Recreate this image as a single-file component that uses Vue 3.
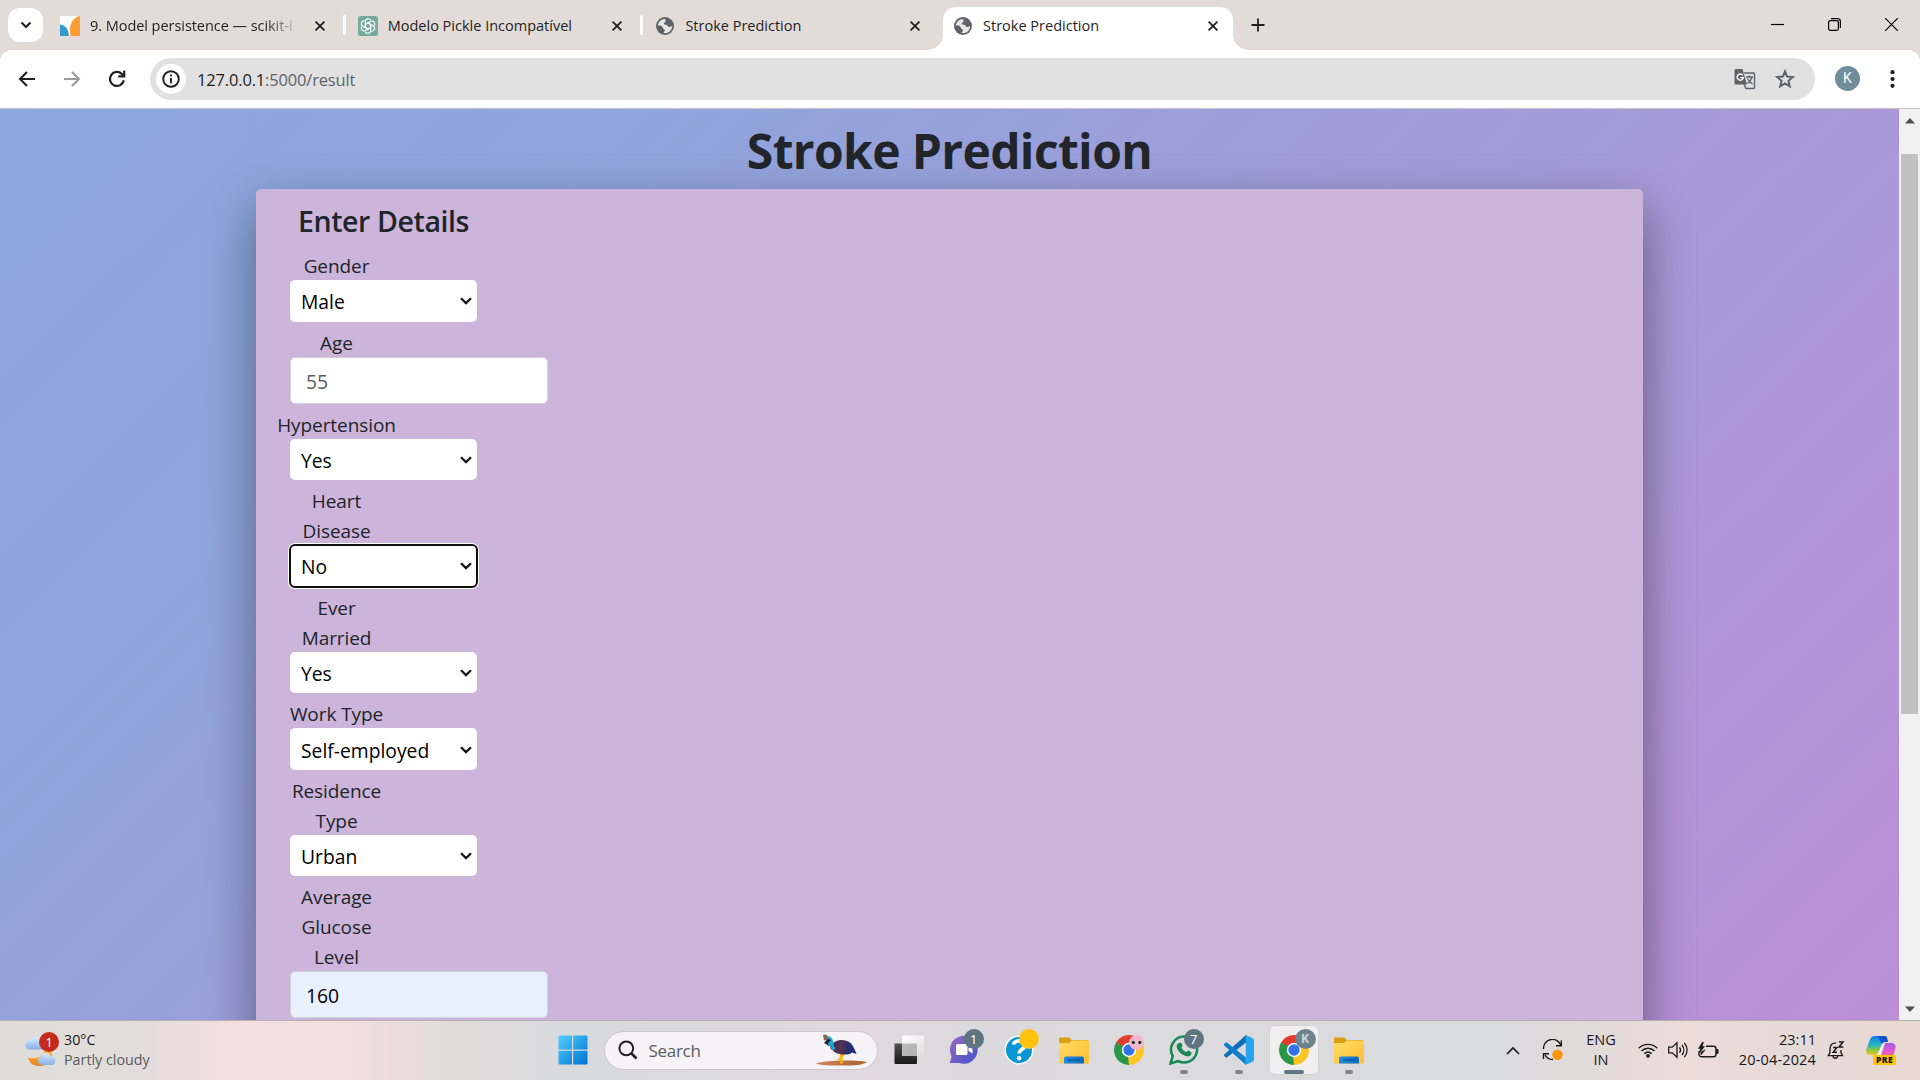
<script setup>
const tabs = [
  { title: '9. Model persistence — scikit-l', icon: 'sklearn', cut: true },
  { title: 'Modelo Pickle Incompatível', icon: 'gpt', line: true },
  { title: 'Stroke Prediction', icon: 'globe', line: true },
  { title: 'Stroke Prediction', icon: 'globe', active: true },
]

const fields = [
  { label: ['Gender'], value: 'Male', type: 'select' },
  { label: ['Age'], value: '55', type: 'placeholder' },
  { label: ['Hypertension'], value: 'Yes', type: 'select' },
  { label: ['Heart', 'Disease'], value: 'No', type: 'select', focus: true },
  { label: ['Ever', 'Married'], value: 'Yes', type: 'select' },
  { label: ['Work Type'], value: 'Self-employed', type: 'select' },
  { label: ['Residence', 'Type'], value: 'Urban', type: 'select' },
  { label: ['Average', 'Glucose', 'Level'], value: '160', type: 'filled' },
]

const apps = [
  { icon: 'taskview' },
  { icon: 'chat', badge: '1' },
  { icon: 'help', badge: ' ', tone: 'yellow' },
  { icon: 'folder' },
  { icon: 'chrome', face: true },
  { icon: 'whatsapp', badge: '7', open: true },
  { icon: 'vscode', open: true },
  { icon: 'chrome', badge: 'K', tone: 'profile', current: true },
  { icon: 'folder', open: true },
]
</script>

<template>
  <div class="screen">
    <header class="tabstrip">
      <button class="tab-search">
        <svg width="12" height="8" viewBox="0 0 12 8"><path d="M1.500 1.500 6 6l4.500-4.500" fill="none" stroke="#1f1f1f" stroke-width="2.200" /></svg>
      </button>
      <div class="tabs">
        <div v-for="(t, i) in tabs" :key="i" class="tab" :class="{ active: t.active, lined: t.line }">
          <svg v-if="t.icon === 'sklearn'" class="fav" viewBox="0 0 20 20">
            <path d="M0 0h20v20H0z" fill="#fff" />
            <path d="M0 8.500C5 9 8.800 13 8.800 20H0z" fill="#3499cd" />
            <path d="M20 0v20h-9.500C8.500 10 12 1 20 0z" fill="#ff9b33" />
          </svg>
          <svg v-else-if="t.icon === 'gpt'" class="fav" viewBox="0 0 20 20">
            <rect width="20" height="20" rx="3" fill="#74aa9c" />
            <g fill="none" stroke="#fff" stroke-width="1.150" stroke-linejoin="round">
              <path v-for="a in 6" :key="a" :transform="`rotate(${a * 60} 10 10)`" d="M7.300 8.400V5.600C7.300 2.300 11.600 1.900 12.700 4.300M10 7 12.700 8.500v3.300" />
            </g>
          </svg>
          <svg v-else class="fav" viewBox="0 0 20 20">
            <circle cx="10" cy="10" r="9" fill="#5f6368" />
            <path d="M10.500 2.900c-4.200-.2-7.500 3-7.600 6.700 1.500-.2 3.400-.1 4.300.9 1 .9.400 2.100 1.500 2.600.9.300 1.300.9 1.100 1.700-.2.900-1.100 1.100-1 2.200 4 .8 8.300-2.300 8.300-6.600-1.400-.3-1.700.8-3 .7-1.500-.1-1.300-1.900-2.700-2.300-1.200-.3-2.700-.1-2.600-1.400.1-1 1.300-.9 1.700-1.700.400-.9-.6-1.500 0-2.800z" fill="#e9e6e5" />
          </svg>
          <span class="tab-title" :class="{ cut: t.cut }">{{ t.title }}</span>
          <svg class="tab-x" width="12" height="12" viewBox="0 0 12 12"><path d="m1.600 1.600 8.800 8.800M10.400 1.600 1.600 10.400" stroke="#1f1f1f" stroke-width="1.800" /></svg>
        </div>
      </div>
      <svg class="plus" width="14" height="14" viewBox="0 0 14 14"><path d="M7 .5v13M.5 7h13" stroke="#1f1f1f" stroke-width="1.800" /></svg>
      <div class="win">
        <svg width="13" height="13" viewBox="0 0 13 13"><path d="M0 6.500h13" stroke="#000" stroke-width="1.200" /></svg>
        <svg width="13" height="13" viewBox="0 0 13 13" fill="none" stroke="#000" stroke-width="1.200"><rect x=".6" y="2.600" width="9.800" height="9.800" rx="1.800" /><path d="M3 .6h6.400a3 3 0 0 1 3 3V10" /></svg>
        <svg width="13" height="13" viewBox="0 0 13 13"><path d="m0 0 13 13M13 0 0 13" stroke="#000" stroke-width="1.200" /></svg>
      </div>
    </header>

    <nav class="toolbar">
      <svg class="nav" viewBox="0 0 20 20" fill="none" stroke="#1f1f1f" stroke-width="2.100"><path d="M18 10H3.500M10 3l-7 7 7 7" /></svg>
      <svg class="nav" viewBox="0 0 20 20" fill="none" stroke="#9b9b9b" stroke-width="2.100"><path d="M2 10h14.500M10 3l7 7-7 7" /></svg>
      <svg class="nav" viewBox="0 0 20 20" fill="none" stroke="#1f1f1f" stroke-width="2.200"><path d="M16.800 11.300A7 7 0 1 1 14.900 5l2 2" /><path d="M17.200 1.500v5.900h-5.900" /></svg>
      <div class="omnibox">
        <span class="site">
          <svg width="18" height="18" viewBox="0 0 18 18"><circle cx="9" cy="9" r="7.800" fill="none" stroke="#1f1f1f" stroke-width="1.900" /><path d="M9 8v5.200M9 4.500v2" stroke="#1f1f1f" stroke-width="1.900" /></svg>
        </span>
        <span class="url"><b>127.0.0.1</b>:5000/result</span>
        <svg class="translate" width="22" height="22" viewBox="0 0 22 22">
          <path d="M10 5h9.500a1 1 0 0 1 1 1v13.500a1 1 0 0 1-1 1H12L10 16" fill="#e1e1e1" stroke="#5f6368" stroke-width="1.400" />
          <path d="M2 1h6.500L13 16.500H2A1.500 1.500 0 0 1 .5 15V2.500A1.500 1.500 0 0 1 2 1z" fill="#5f6368" />
          <path d="M8.800 7.300A3.100 3.100 0 1 0 9.300 9.600H6.300" fill="none" stroke="#fff" stroke-width="1.400" />
          <path d="M12 9h7M15.500 7.500V9M18 9c-.6 3-2.500 5-4.500 6.500M13.500 10.500c1 2.500 2.500 4 5 5.500" fill="none" stroke="#5f6368" stroke-width="1.300" />
        </svg>
        <svg class="star" width="20" height="20" viewBox="0 0 20 20"><path d="m10 2.400 2.100 5.200 5.700.5-4.300 3.700 1.300 5.500L10 14.400l-4.800 2.900 1.300-5.500L2.200 8.100l5.700-.5z" fill="none" stroke="#5f6368" stroke-width="2" /></svg>
      </div>
      <span class="profile">K</span>
      <svg class="dots" width="5" height="18" viewBox="0 0 5 18" fill="#1f1f1f"><circle cx="2.500" cy="2.200" r="2.100" /><circle cx="2.500" cy="9" r="2.100" /><circle cx="2.500" cy="15.800" r="2.100" /></svg>
    </nav>

    <div class="viewport">
      <main class="page">
        <h1>Stroke Prediction</h1>
        <section class="card">
          <h2>Enter Details</h2>
          <div v-for="(f, i) in fields" :key="i" class="field">
            <div class="label"><span v-for="l in f.label" :key="l">{{ l }}</span></div>
            <div class="control" :class="[f.type, { focus: f.focus }]">
              <span>{{ f.value }}</span>
              <svg v-if="f.type === 'select'" width="12" height="8" viewBox="0 0 12 8"><path d="m1 1.200 5 4.900 5-4.900" fill="none" stroke="#111" stroke-width="2.200" /></svg>
            </div>
          </div>
        </section>
      </main>
      <aside class="scrollbar">
        <svg width="10" height="6" viewBox="0 0 10 6"><path d="M0 5.500 5 0l5 5.500z" fill="#505050" /></svg>
        <div class="track"><div class="thumb"></div></div>
        <svg width="10" height="6" viewBox="0 0 10 6"><path d="M0 .5 5 6l5-5.500z" fill="#505050" /></svg>
      </aside>
    </div>

    <footer class="taskbar">
      <div class="weather">
        <div class="weather-icon">
          <svg width="32" height="34" viewBox="0 0 32 34">
            <defs>
              <linearGradient id="cloud" x2="0" y2="1"><stop stop-color="#d9ebff" /><stop offset="1" stop-color="#83aee9" /></linearGradient>
              <linearGradient id="moon" x2="0" y2="1"><stop stop-color="#ffc53b" /><stop offset="1" stop-color="#ef7d1a" /></linearGradient>
            </defs>
            <path d="M5 16.500a4.500 4.500 0 0 1-.3-9C6 3.500 13 3.500 14 8c5 0 5 8.500 1 8.500z" fill="url(#cloud)" />
            <path d="M26.500 17c3 10-6 18.500-16 15.500-4-1-6.500-4-7.500-8 9 2 15-1 16-6z" fill="url(#moon)" />
            <path d="M17 32a4.300 4.300 0 0 1-.5-8.500c1-4.500 8-4.500 9-.3 6 0 6.500 8.800 1 8.800z" fill="url(#cloud)" />
          </svg>
          <span class="badge red">1</span>
        </div>
        <div class="weather-text"><span>30°C</span><span class="muted">Partly cloudy</span></div>
      </div>

      <div class="center">
        <svg class="start" width="30" height="30" viewBox="0 0 30 30">
          <defs><linearGradient id="win" x2="1" y2="1"><stop stop-color="#4fd0ff" /><stop offset="1" stop-color="#0072d0" /></linearGradient></defs>
          <path d="M1.500.5H14v14H.5v-13a1 1 0 0 1 1-1zM15.200.5h13.300a1 1 0 0 1 1 1v13H15.200zM.5 15.700H14v13.800H1.500a1 1 0 0 1-1-1zM15.200 15.700h14.300v12.800a1 1 0 0 1-1 1H15.200z" fill="url(#win)" />
        </svg>
        <div class="search">
          <svg width="20" height="20" viewBox="0 0 20 20"><circle cx="8.300" cy="8.300" r="6.900" fill="none" stroke="#222" stroke-width="2" /><path d="m13 13 5.500 5.500" stroke="#222" stroke-width="2.600" /></svg>
          <span>Search</span>
          <svg class="bird" width="51" height="32" viewBox="0 0 51 32">
            <defs>
              <linearGradient id="body" x1="0" x2="1"><stop stop-color="#2a3560" /><stop offset=".35" stop-color="#5a3050" /><stop offset=".65" stop-color="#2c2f66" /><stop offset="1" stop-color="#16309a" /></linearGradient>
              <linearGradient id="ground"><stop stop-color="#d08560" /><stop offset="1" stop-color="#a8632f" /></linearGradient>
            </defs>
            <path d="M0 29.500c8-3.500 42-4 51-1.500-4 3-12 3.500-25 3.500S6 31.500 0 29.500z" fill="url(#ground)" />
            <path d="m24 18-.5 6L19 27l5-1.500.5 5L27 29l-.5-5 3.500-6z" fill="#f2b90c" />
            <path d="M15.500 12C17 6.500 25 4.500 31 7c5 2 6 5 7.500 8l2 5-4.500-1.500c-2 2.500-9 2.500-12 1.500-4.500-.5-8.500-3-8.500-8z" fill="url(#body)" />
            <path d="M10 6c1 5 4 5 5 9 2 2 4 1 4.500-1-2.500-2-1.500-4-2.500-7-1-5-6-6-7-3z" fill="#18a6c9" />
            <path d="M7 1c2-1 4-.5 4.500 1L11 6 8 6.500z" fill="#8a6252" />
            <path d="M8 9 12 5l3 1-3 3 1 3.500-2-2z" fill="#1c1b3c" />
            <path d="m15 11 1.500 5-2-1z" fill="#d5356a" />
          </svg>
        </div>
        <div class="apps">
          <div v-for="(a, i) in apps" :key="i" class="app" :class="{ current: a.current }">
            <svg v-if="a.icon === 'taskview'" width="30" height="30" viewBox="0 0 30 30">
              <defs>
                <linearGradient id="tvd" x2="0" y2="1"><stop stop-color="#505050" /><stop offset="1" stop-color="#191919" /></linearGradient>
                <linearGradient id="tvl" x2="1" y2="1"><stop stop-color="#fff" /><stop offset="1" stop-color="#dedede" /></linearGradient>
              </defs>
              <rect x=".5" y="8.500" width="22.500" height="20.500" rx="1" fill="url(#tvd)" />
              <rect x="8" y=".5" width="22" height="20.500" rx="1" fill="url(#tvl)" />
              <path d="M8 8.500h15V21H8.500z" fill="#a3a3a3" opacity=".75" />
            </svg>
            <svg v-else-if="a.icon === 'chat'" width="30" height="30" viewBox="0 0 30 30">
              <defs><linearGradient id="cht" x2="1" y2="1"><stop stop-color="#9a6ac0" /><stop offset="1" stop-color="#4452d0" /></linearGradient></defs>
              <path d="M15 .8a14 14 0 1 1-5 27.200H.8l1.800-6.500A14 14 0 0 1 15 .8z" fill="url(#cht)" />
              <rect x="7" y="9" width="11.500" height="11" rx="1.500" fill="#fff" /><path d="m19.500 13 4-2.500v8l-4-2.500z" fill="#fff" />
            </svg>
            <svg v-else-if="a.icon === 'help'" width="30" height="30" viewBox="0 0 30 30">
              <circle cx="15" cy="15" r="14.500" fill="#fff" /><circle cx="15" cy="15" r="13" fill="#0795d4" />
              <path d="M9.500 9.500C10 5 20.500 4 21 10c0 4.500-6 4-5.800 8.500" fill="none" stroke="#fff" stroke-width="3.800" /><circle cx="15.100" cy="23.300" r="2.300" fill="#fff" />
            </svg>
            <svg v-else-if="a.icon === 'folder'" width="30" height="30" viewBox="0 0 30 30">
              <defs>
                <linearGradient id="fld" x2="1" y2="1"><stop stop-color="#ffdb69" /><stop offset="1" stop-color="#fdbf2d" /></linearGradient>
                <linearGradient id="tray" x2="1"><stop stop-color="#1f8ee8" /><stop offset="1" stop-color="#0b6cc2" /></linearGradient>
              </defs>
              <path d="M0 3.500a1 1 0 0 1 1-1h9l3 2.500h15a1.500 1.500 0 0 1 1.500 1.500V12H0z" fill="#daa012" />
              <path d="M0 8h10l3-2.500h15.500A1.500 1.500 0 0 1 30 7v20.500a1 1 0 0 1-1 1H1a1 1 0 0 1-1-1z" fill="url(#fld)" />
              <path d="M5 28.500v-5a2 2 0 0 1 2-2h16a2 2 0 0 1 2 2v5z" fill="url(#tray)" /><path d="M8.500 25h13" stroke="#0a4b8c" stroke-width="1.200" />
            </svg>
            <svg v-else-if="a.icon === 'chrome'" width="30" height="30" viewBox="0 0 30 30">
              <path d="M15 15 2.010 7.500A15 15 0 0 1 27.990 7.500z" fill="#e33b2e" />
              <path d="M15 15 27.990 7.500A15 15 0 0 1 15 30z" fill="#fcc521" />
              <path d="M15 15 15 30A15 15 0 0 1 2.010 7.500z" fill="#2a9747" />
              <path d="M15 8.200h13.400l-.4-.7H15z" fill="#e33b2e" /><path d="M9.100 18.400 2.010 7.500 9 11z" fill="#2a9747" /><path d="M20.900 18.400 15 30l-1-8z" fill="#fcc521" />
              <circle cx="15" cy="15" r="7.200" fill="#fff" /><circle cx="15" cy="15" r="5.700" fill="#3373e8" />
            </svg>
            <svg v-else-if="a.icon === 'whatsapp'" width="30" height="30" viewBox="0 0 30 30">
              <path d="M15.500 1.500a13 13 0 1 1-6.300 24.600L1.500 28.500l2.300-7.300A13.200 13.200 0 0 1 15.500 1.500z" fill="none" stroke="#168756" stroke-width="2.500" />
              <path d="M10.800 8c1.500-.5 2 .5 2.500 2.300.5 1.300-1 1.700-.8 2.500 1 2 2.500 3.400 4.700 4.300.8.300 1.300-1.600 2.200-1.500l3 1.600c.6 3.500-2.700 4.600-5 4C12.500 20 8.500 16 7.700 12c-.2-2 1-4 3.100-4z" fill="#168756" />
            </svg>
            <svg v-else width="30" height="30" viewBox="0 0 30 30">
              <path d="M.5 19.200 22 0v7.500L3.200 22.200a1.300 1.300 0 0 1-1.700 0l-1-.9a1.400 1.400 0 0 1 0-2.100z" fill="#0f6fb8" />
              <path d="M.5 10.800 22 30v-7.500L3.200 7.800a1.300 1.300 0 0 0-1.700 0l-1 .9a1.400 1.400 0 0 0 0 2.100z" fill="#0d7fcb" />
              <path d="m21.500 30 7-3.300a2.500 2.500 0 0 0 1.500-2.200v-19a2.500 2.500 0 0 0-1.500-2.200L22 0z" fill="#27a5ee" />
            </svg>
            <svg v-if="a.face" class="face" width="15" height="15" viewBox="0 0 15 15">
              <circle cx="7.500" cy="7.500" r="7.500" fill="#f8b3ca" /><ellipse cx="4.300" cy="7.500" rx="2.800" ry="2.300" fill="#ddd" /><ellipse cx="10.800" cy="7.500" rx="2.800" ry="2.300" fill="#ddd" /><circle cx="4.300" cy="7.500" r="1.800" fill="#33302f" /><circle cx="10.800" cy="7.500" r="1.800" fill="#33302f" />
            </svg>
            <span v-if="a.badge" class="badge" :class="a.tone">{{ a.badge }}</span>
            <i v-if="a.open || a.current" class="mark"></i>
          </div>
        </div>
      </div>

      <div class="tray">
        <svg class="up" width="14" height="9" viewBox="0 0 14 9"><path d="m1 8 6-6 6 6" fill="none" stroke="#1a1a1a" stroke-width="1.700" /></svg>
        <svg class="sync" width="22" height="22" viewBox="0 0 22 22">
          <path d="M1.500 10A9 9 0 0 1 19 6.500M19.300 1.500v5.300H14M11 20.500A9 9 0 0 1 3 16M1.500 20v-5.200h5.500" fill="none" stroke="#1a1a1a" stroke-width="1.400" /><circle cx="15.500" cy="15.700" r="5.200" fill="#ff9500" />
        </svg>
        <div class="lang"><span>ENG</span><span>IN</span></div>
        <svg class="wifi" width="20" height="16" viewBox="0 0 20 16"><path d="M.7 6.300c5.300-5.300 13.300-5.300 18.600 0M3.500 9c3.800-3.700 9.200-3.700 13 0M6.300 11.800c2.200-2.100 5.200-2.100 7.400 0" fill="none" stroke="#1a1a1a" stroke-width="1.400" /><circle cx="10" cy="13.800" r="1.900" fill="#1a1a1a" /></svg>
        <svg class="vol" width="20" height="18" viewBox="0 0 20 18" fill="none" stroke="#1a1a1a" stroke-width="1.300"><path d="M.7 6.200h3.500L9 1.800v14.400l-4.800-4.400H.7z" /><path d="M11.500 6.300c1.200 1.500 1.200 3.900 0 5.400M14 4c2.400 2.900 2.400 7.100 0 10M16.400 2c3.600 4 3.600 10 0 14" /></svg>
        <svg class="bat" width="21" height="17" viewBox="0 0 21 17"><path d="M8 4.200h7.500a2.500 2.500 0 0 1 2.500 2.500v5.600a2.500 2.500 0 0 1-2.500 2.500h-12A2.500 2.500 0 0 1 1 12.300V9" fill="none" stroke="#1a1a1a" stroke-width="1.400" /><path d="M18 7h1.500a1 1 0 0 1 1 1v3a1 1 0 0 1-1 1H18z" fill="#1a1a1a" /><path d="M4.500 0 .5 6.500h2L1.500 11l5-6.500H4.200L5.500 0zM3 10l4-2-4 5z" fill="#1a1a1a" stroke="#1a1a1a" stroke-width=".6" /></svg>
        <div class="clock"><span>23:11</span><span class="date">20-04-2024</span></div>
        <svg class="bell" width="18" height="19" viewBox="0 0 18 19" fill="none" stroke="#1a1a1a"><path d="M9 2.200C5 1.500 3 4.500 3 8v3.500l-1.800 3.200h14.300L14 11.500V9" stroke-width="1.300" /><path d="M6 15c.3 3 4.400 3 4.800 0" stroke-width="1.300" /><path d="M6.200 6.500h3.600l-3.600 4.700h3.800M12 1h4l-4 5h4.300" stroke-width="1.500" /></svg>
        <div class="copilot">
          <svg width="30" height="26" viewBox="0 0 30 26">
            <defs>
              <linearGradient id="cpa" x2="0" y2="1"><stop stop-color="#1478e8" /><stop offset=".45" stop-color="#22b5c8" /><stop offset=".75" stop-color="#8fc741" /><stop offset="1" stop-color="#f5c52e" /></linearGradient>
              <linearGradient id="cpb" x2="0" y2="1"><stop stop-color="#a65ae6" /><stop offset=".5" stop-color="#e35bd0" /><stop offset="1" stop-color="#fb6f5a" /></linearGradient>
            </defs>
            <path d="M9 1h9.500c2 0 2.500 1 3.500 6h-3c-2 0-3 1-4 4l-2 6c-1 2.500-2 3-4 3H4c-3 0-4.500-2-3.500-6L4 4.500C5 2 6.500 1 9 1z" fill="url(#cpa)" />
            <path d="M12 1h6.500c2 0 2.500 1 3.500 6h-3c-2 0-3 1-3.300 2z" fill="#1750d0" />
            <path d="M18 8h7c4 0 5 2.500 4.500 5l-2.300 8c-.8 3-2.500 4-5 4H9c2 0 3-1 4-4l2.500-9c.8-2.500 1-4 2.500-4z" fill="url(#cpb)" />
            <path d="m11 20 4.500-9c1-2.500 2-3 3.500-3l-4 12z" fill="#fff" opacity=".9" />
          </svg>
          <span>PRE</span>
        </div>
      </div>
    </footer>
  </div>
</template>

<style>
html,
body {
  margin: 0;
  overflow: hidden;
}
</style>

<style scoped>
* {
  box-sizing: border-box;
}
svg {
  display: block;
  flex: none;
}
.screen {
  width: 1920px;
  height: 1080px;
  display: flex;
  flex-direction: column;
  overflow: hidden;
  font-family: "Open Sans", "Noto Sans", sans-serif;
  color: #212529;
  white-space: nowrap;
  background: #e3dbd8;
}
/* tab strip */
.tabstrip {
  height: 50px;
  flex: none;
  display: flex;
  align-items: flex-start;
  padding-left: 8px;
}
.tab-search {
  width: 35px;
  height: 34px;
  margin-top: 8px;
  padding: 0;
  border: 0;
  border-radius: 12px;
  background: #fff;
  display: flex;
  align-items: center;
  justify-content: center;
}
.tabs {
  display: flex;
  margin-left: 7px;
  gap: 8px;
}
.tab {
  position: relative;
  width: 289.700px;
  height: 43px;
  margin-top: 7px;
  padding: 0 14px 6px 10px;
  display: flex;
  align-items: center;
}
.tab.active {
  background: #fff;
  border-radius: 13px 13px 0 0;
}
.tab.active::before,
.tab.active::after {
  content: "";
  position: absolute;
  bottom: 0;
  width: 15px;
  height: 15px;
  left: -15px;
  background: radial-gradient(circle at 0 0, transparent 14.500px, #fff 15px);
}
.tab.active::after {
  left: auto;
  right: -15px;
  background: radial-gradient(circle at 100% 0, transparent 14.500px, #fff 15px);
}
.tab.lined::before {
  content: "";
  position: absolute;
  left: -5px;
  top: 8px;
  width: 3px;
  height: 20px;
  border-radius: 2px;
  background: #fff;
}
.fav {
  width: 20px;
  height: 20px;
}
.tab-title {
  margin-left: 10px;
  font-size: 14.500px;
  line-height: 24px;
  color: #1f1f1f;
}
.tab-title.cut {
  letter-spacing: -0.050px;
  -webkit-mask-image: linear-gradient(90deg, #000 86%, rgba(0, 0, 0, 0.2));
  mask-image: linear-gradient(90deg, #000 86%, rgba(0, 0, 0, 0.2));
}
.tab-x {
  margin-left: auto;
}
.plus {
  margin: 18px 0 0 18px;
}
.win {
  margin: 18px 22px 0 auto;
  display: flex;
  gap: 44px;
}
/* toolbar */
.toolbar {
  height: 59px;
  flex: none;
  display: flex;
  align-items: center;
  padding: 0 25px 1px 17px;
  background: #fff;
  border-bottom: 1px solid #c6c5c4;
  border-radius: 12px 12px 0 0;
}
.nav {
  width: 20px;
  height: 20px;
  margin-right: 25px;
}
.omnibox {
  width: 1665px;
  height: 42px;
  margin-left: -2px;
  padding: 0 20px 0 6px;
  border-radius: 21px;
  background: #e1e1e1;
  display: flex;
  align-items: center;
}
.site {
  width: 30px;
  height: 30px;
  border-radius: 50%;
  background: #fff;
  display: flex;
  align-items: center;
  justify-content: center;
}
.url {
  margin: 1px 0 0 11px;
  font-size: 16.500px;
  letter-spacing: -0.170px;
  color: #5f6368;
}
.url b {
  font-weight: 400;
  color: #1f1f1f;
}
.translate {
  margin-left: auto;
}
.star {
  margin-left: 19px;
}
.profile {
  width: 25px;
  height: 25px;
  margin-left: 20px;
  border-radius: 50%;
  background: #6f8d9b;
  color: #fff;
  font: 14px/25px Roboto, sans-serif;
  text-align: center;
}
.dots {
  margin-left: auto;
}
/* page */
.viewport {
  flex: 1;
  min-height: 0;
  display: flex;
}
.page {
  flex: 1;
  overflow: hidden;
  background: linear-gradient(135deg, #8ba7de 0%, #8ea5dd 22%, #9b9fda 42%, #a998d8 68%, #bc8fd6 100%);
}
h1 {
  height: 80px;
  margin: 0;
  text-align: center;
  font-size: 48px;
  font-weight: 700;
  line-height: 83px;
  letter-spacing: -0.640px;
}
.card {
  width: 1387px;
  height: 1200px;
  margin-left: 256px;
  padding: 14px 0 0 34px;
  border-radius: 5px;
  background: #ccb4db;
  box-shadow: 0 20px 50px rgba(0, 0, 0, 0.42);
}
h2 {
  height: 47px;
  margin: 0 0 0 8px;
  font-size: 28.500px;
  font-weight: 600;
  line-height: 36px;
  letter-spacing: -0.400px;
}
.field {
  margin-bottom: 5px;
  font-size: 19.300px;
}
.label {
  width: 93px;
  display: flex;
  flex-direction: column;
  align-items: center;
  font-size: 19px;
  letter-spacing: -0.080px;
  line-height: 30px;
}
.label span {
  flex: none;
  position: relative;
  top: 1px;
}
.control {
  width: 187px;
  height: 41.580px;
  padding: 1px 5px 0 11px;
  display: flex;
  align-items: center;
  justify-content: space-between;
  border-radius: 5px;
  background: #fff;
  color: #000;
}
.control.select span {
  padding-top: 1px;
}
.control.focus {
  outline: 2px solid #101010;
  outline-offset: -1px;
  box-shadow: 0 0 0 2px #fff;
}
.control.placeholder,
.control.filled {
  width: 257.500px;
  height: 47px;
  padding: 2px 0 0 15px;
  border: 1px solid #ced4da;
  color: #595c5f;
}
.control.filled {
  background: #e8f0fe;
  color: #000;
}
.scrollbar {
  width: 21px;
  background: #f1f1f1;
  display: flex;
  flex-direction: column;
  align-items: center;
  padding: 9px 0 8px;
}
.track {
  flex: 1;
  width: 17px;
  padding-top: 30px;
}
.thumb {
  height: 560px;
  background: #c1c1c1;
}
/* taskbar */
.taskbar {
  height: 60px;
  flex: none;
  display: flex;
  align-items: center;
  padding-bottom: 1px;
  border-top: 1px solid #b5b0b4;
  background: linear-gradient(90deg, #dfdcd8 0, #e1dddb 110px, #e6dcdf 155px, #f5dfdf 240px, #f3dddd 350px, #dfdbdb 460px, #d9dadc 560px, #dcdadd 760px, #e3d8df 870px, #dbd9dc 970px, #dadbdd 1500px, #e4dad9 1620px, #eddcd8 1690px, #e4dad8 1790px, #ead8d0 1920px);
}
.weather {
  width: 557.500px;
  padding-left: 25px;
  display: flex;
  align-items: center;
}
.weather-icon {
  position: relative;
  width: 39px;
}
.weather-text,
.lang,
.clock {
  display: flex;
  flex-direction: column;
  font-size: 14.500px;
  line-height: 20px;
  color: #191919;
}
.weather-text {
  font-size: 14.300px;
}
.weather-text .muted {
  color: #5b5b5b;
}
.badge {
  position: absolute;
  width: 20px;
  height: 20px;
  right: 4px;
  top: 3px;
  border-radius: 50%;
  background: #5d7583;
  color: #fff;
  font-size: 13.500px;
  line-height: 20px;
  text-align: center;
}
.badge.red {
  right: 5px;
  top: -1px;
  background: #c42b1c;
}
.badge.yellow {
  background: #ffc20e;
}
.badge.profile {
  width: 21px;
  right: 2px;
  background: #6d828d;
  color: #cfd8dc;
  font: 700 12px/20px "Open Sans", sans-serif;
}
.center {
  display: flex;
  align-items: center;
}
.search {
  width: 274px;
  height: 39px;
  margin: 0 7px 0 16px;
  padding: 0 10px 0 13px;
  border: 1px solid #cbc7ca;
  border-radius: 20px;
  background: #f5f3f5;
  display: flex;
  align-items: center;
  font-size: 17px;
  letter-spacing: -0.300px;
  color: #5c5c5c;
}
.search span {
  margin-left: 11px;
}
.bird {
  margin-left: auto;
}
.apps {
  display: flex;
  gap: 7px;
}
.app {
  position: relative;
  width: 48px;
  height: 48px;
  display: flex;
  align-items: center;
  justify-content: center;
  border-radius: 5px;
}
.app.current {
  background: #f0eeef;
  box-shadow: 0 0 0 0.500px #cfcdce;
}
.face {
  position: absolute;
  right: 9px;
  top: 9px;
}
.mark {
  position: absolute;
  left: 20px;
  bottom: 0;
  width: 8px;
  height: 4px;
  border-radius: 2px;
  background: #868485;
}
.current .mark {
  left: 14px;
  width: 20px;
  background: #5f7685;
}
.tray {
  margin-left: auto;
  padding-right: 24px;
  display: flex;
  align-items: center;
}
.sync {
  margin-left: 22px;
}
.lang {
  width: 30px;
  margin-left: 22px;
  text-align: center;
  align-items: center;
}
.wifi {
  margin-left: 22px;
}
.vol {
  margin-left: 10px;
}
.bat {
  margin-left: 10px;
}
.clock {
  width: 80px;
  margin-left: 17px;
  align-items: flex-end;
}
.date {
  letter-spacing: 0.150px;
}
.bell {
  margin-left: 11px;
}
.copilot {
  position: relative;
  margin-left: 21px;
  height: 30px;
}
.copilot span {
  position: absolute;
  left: 7px;
  bottom: 0;
  width: 23px;
  height: 10px;
  border-radius: 2px;
  background: #ffc400;
  color: #1d1600;
  font: 800 8.500px/10px "Open Sans", sans-serif;
  letter-spacing: 0.400px;
  text-align: center;
}
</style>
